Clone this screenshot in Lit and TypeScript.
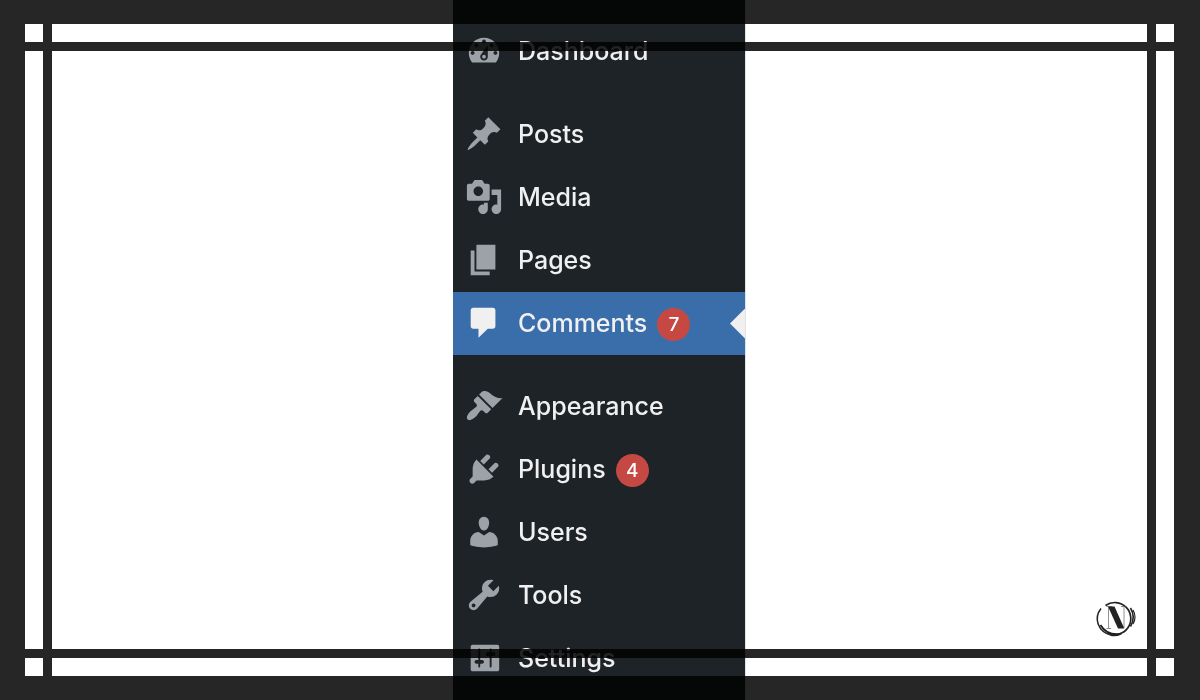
import { LitElement, html, css, svg, nothing } from "lit";
import { customElement, property } from "lit/decorators.js";

const ICONS: Record<string, string> = {
  dashboard:
    "M3.76 16h12.48c1.1-1.37 1.76-3.11 1.76-5 0-4.42-3.58-8-8-8s-8 3.58-8 8c0 1.89.66 3.63 1.76 5zM10 4c.55 0 1 .45 1 1s-.45 1-1 1-1-.45-1-1 .45-1 1-1zM6 6c.55 0 1 .45 1 1s-.45 1-1 1-1-.45-1-1 .45-1 1-1zm8 0c.55 0 1 .45 1 1s-.45 1-1 1-1-.45-1-1 .45-1 1-1zm-5.37 5.55L12 7v6c0 1.1-.9 2-2 2s-2-.9-2-2c0-.57.24-1.08.63-1.45zM4 10c.55 0 1 .45 1 1s-.45 1-1 1-1-.45-1-1 .45-1 1-1zm12 0c.55 0 1 .45 1 1s-.45 1-1 1-1-.45-1-1 .45-1 1-1zm-5 3c0-.55-.45-1-1-1s-1 .45-1 1 .45 1 1 1 1-.45 1-1z",
  posts:
    "M10.44 3.02l1.82-1.82 6.36 6.35-1.83 1.82c-1.05-.68-2.48-.57-3.41.36l-.75.75c-.92.93-1.04 2.35-.35 3.41l-1.83 1.82-2.41-2.41-2.8 2.79c-.42.42-3.38 2.71-3.8 2.29s1.86-3.39 2.28-3.81l2.79-2.79L4.1 9.36l1.83-1.82c1.05.69 2.48.57 3.4-.36l.75-.75c.93-.92 1.05-2.35.36-3.41z",
  media:
    "M13 11V4c0-.55-.45-1-1-1h-1.67L9 1H5L3.67 3H2c-.55 0-1 .45-1 1v7c0 .55.45 1 1 1h10c.55 0 1-.45 1-1zM7 4.5c1.38 0 2.5 1.12 2.5 2.5S8.38 9.5 7 9.5 4.5 8.38 4.5 7 5.62 4.5 7 4.5zM14 6h5v10.5c0 1.38-1.12 2.5-2.5 2.5S14 17.88 14 16.5s1.12-2.5 2.5-2.5c.17 0 .34.02.5.05V9h-3V6zm-4 8.05V13h2v3.5c0 1.38-1.12 2.5-2.5 2.5S7 17.88 7 16.5 8.12 14 9.5 14c.17 0 .34.02.5.05z",
  pages: "M6 15V2h10v13H6zm-1 1h8v2H3V5h2v11z",
  comments:
    "M4.3 2h10.4c.72 0 1.3.58 1.3 1.3v8.4c0 .72-.58 1.3-1.3 1.3H12l-4.9 4.8V13H4.3c-.72 0-1.3-.58-1.3-1.3V3.3C3 2.58 3.58 2 4.3 2z",
  appearance:
    "M14.48 11.06L7.41 3.99l1.5-1.5c.5-.56 2.3-.47 3.51.32 1.21.8 1.43 1.28 2.91 2.1 1.18.64 2.45 1.26 4.45.85zm-.71.71L6.7 4.7 4.93 6.47c-.39.39-.39 1.02 0 1.41l1.06 1.06c.39.39.39 1.03 0 1.42-.6.6-1.43 1.11-2.21 1.69-.35.26-.7.53-1.01.84C1.43 14.23.4 16.08 1.4 17.07c.99 1 2.84-.03 4.18-1.36.31-.31.58-.66.85-1.02.57-.78 1.08-1.61 1.69-2.21.39-.39 1.02-.39 1.41 0l1.06 1.06c.39.39 1.02.39 1.41 0z",
  plugins:
    "M13.11 4.36L9.87 7.6 8 5.73l3.24-3.24c.35-.34 1.05-.2 1.56.32.52.51.66 1.21.31 1.55zm-8 1.77l.91-1.12 9.01 9.01-1.19.84c-.71.71-2.63 1.16-3.82 1.16H6.14L4.9 17.26c-.59.59-1.54.59-2.12 0-.59-.58-.59-1.53 0-2.12l1.24-1.24v-3.88c0-1.13.4-3.19 1.09-3.89zm7.26 3.97l3.24-3.24c.34-.35 1.04-.21 1.55.31.52.51.66 1.21.31 1.55l-3.24 3.25z",
  users:
    "M10 9.25c-2.27 0-2.73-3.44-2.73-3.44C7 4.02 7.82 2 9.97 2c2.16 0 2.98 2.02 2.71 3.81 0 0-.41 3.44-2.68 3.44zm0 2.57L12.72 10c2.39 0 4.52 2.33 4.52 4.53v2.49s-3.65 1.13-7.24 1.13c-3.65 0-7.24-1.13-7.24-1.13v-2.49c0-2.25 1.94-4.48 4.47-4.48z",
  tools:
    "M16.68 9.77c-1.34 1.34-3.3 1.67-4.95.99l-5.41 6.52c-.99.99-2.59.99-3.58 0s-.99-2.59 0-3.57l6.52-5.42c-.68-1.65-.35-3.61.99-4.95 1.28-1.28 3.12-1.62 4.72-1.06l-2.89 2.89 2.82 2.82 2.86-2.87c.53 1.58.18 3.39-1.08 4.65zM3.81 16.21c.4.39 1.04.39 1.43 0 .4-.4.4-1.04 0-1.43-.39-.4-1.03-.4-1.43 0-.39.39-.39 1.03 0 1.43z",
  settings:
    "M18 16V4c0-.55-.45-1-1-1H4c-.55 0-1 .45-1 1v12c0 .55.45 1 1 1h13c.55 0 1-.45 1-1zM8 11h1c.55 0 1 .45 1 1s-.45 1-1 1H8v1.5c0 .28-.22.5-.5.5s-.5-.22-.5-.5V13H6c-.55 0-1-.45-1-1s.45-1 1-1h1V5.5c0-.28.22-.5.5-.5s.5.22.5.5V11zm5-2h-1c-.55 0-1-.45-1-1s.45-1 1-1h1V5.5c0-.28.22-.5.5-.5s.5.22.5.5V7h1c.55 0 1 .45 1 1s-.45 1-1 1h-1v5.5c0 .28-.22.5-.5.5s-.5-.22-.5-.5V9z",
};

interface MenuItem {
  icon: string;
  label: string;
  count?: number;
  current?: boolean;
}

const GROUPS: MenuItem[][] = [
  [{ icon: "dashboard", label: "Dashboard" }],
  [
    { icon: "posts", label: "Posts" },
    { icon: "media", label: "Media" },
    { icon: "pages", label: "Pages" },
    { icon: "comments", label: "Comments", count: 7, current: true },
  ],
  [
    { icon: "appearance", label: "Appearance" },
    { icon: "plugins", label: "Plugins", count: 4 },
    { icon: "users", label: "Users" },
    { icon: "tools", label: "Tools" },
    { icon: "settings", label: "Settings" },
  ],
];

@customElement("admin-menu")
export class AdminMenu extends LitElement {
  @property({ attribute: false }) groups: MenuItem[][] = [];

  static styles = css`
    :host {
      display: block;
      box-sizing: border-box;
      width: 292px;
      padding-top: 20px;
      background: #1d2327;
      box-shadow: 1px 0 #e2e2e2;
      font-family: Inter, "Liberation Sans", sans-serif;
    }
    .menu {
      display: flex;
      flex-direction: column;
      gap: 20px;
    }
    .group {
      list-style: none;
      margin: 0;
      padding: 0;
    }
    .item {
      display: flex;
      align-items: center;
      box-sizing: border-box;
      height: 63px;
      padding: 0 0 2px 12px;
      color: #f0f0f1;
      text-decoration: none;
      font-size: 25px;
      font-weight: 450;
      line-height: 32px;
    }
    .icon {
      width: 38px;
      height: 38px;
      margin-right: 15px;
      fill: #9ca2a7;
    }
    .count {
      width: 33px;
      margin: 4px 0 0 10px;
      border-radius: 50%;
      background: #c64843;
      color: #fff;
      font-size: 19px;
      font-weight: 500;
      line-height: 33px;
      text-align: center;
    }
    .current {
      background: #3a6eab;
    }
    .current .icon {
      fill: #f0f0f1;
    }
    .pointer {
      width: 15px;
      height: 30px;
      margin: 2px 0 0 auto;
      background: #f0f0f1;
      clip-path: polygon(100% 0, 100% 100%, 0 50%);
    }
  `;

  private renderItem(item: MenuItem) {
    return html`<li>
      <a
        class="item ${item.current ? "current" : ""}"
        href="#${item.icon}"
        aria-current=${item.current ? "page" : nothing}
      >
        <svg class="icon" viewBox="0 0 20 20" aria-hidden="true">
          ${svg`<path fill-rule="evenodd" d=${ICONS[item.icon]}></path>`}
        </svg>
        <span>${item.label}</span>
        ${item.count ? html`<span class="count">${item.count}</span>` : nothing}
        ${item.current ? html`<span class="pointer"></span>` : nothing}
      </a>
    </li>`;
  }

  render() {
    return html`<nav class="menu" aria-label="Main menu">
      ${this.groups.map((g) => html`<ul class="group">${g.map((i) => this.renderItem(i))}</ul>`)}
    </nav>`;
  }
}

@customElement("app-root")
export class AppRoot extends LitElement {
  static styles = css`
    :host {
      display: flex;
      justify-content: center;
      position: relative;
      box-sizing: border-box;
      height: 100vh;
      padding-right: 2px;
      overflow: hidden;
      background: #fff;
    }
    /* The frame darkens whatever lies below it, menu included. */
    .frame {
      position: absolute;
      inset: 0;
      display: grid;
      grid-template-columns: 18px 1fr 18px;
      grid-template-rows: 18px 1fr 18px;
      border: solid #262626;
      border-width: 24px 26px 24px 25px;
      mix-blend-mode: multiply;
      pointer-events: none;
    }
    .across {
      grid-area: 2 / 1 / 3 / 4;
      border: solid #262626;
      border-width: 9px 0;
    }
    .down {
      grid-area: 1 / 2 / 4 / 3;
      display: grid;
      grid-template-rows: 27px 1fr 27px;
      grid-template-columns: 9px 1fr 9px;
    }
    .bar {
      background: #262626;
    }
    .left {
      grid-area: 1 / 1 / 4 / 2;
    }
    .right {
      grid-area: 1 / 3 / 4 / 4;
    }
    .mark {
      position: absolute;
      right: 62px;
      bottom: 60px;
      width: 44px;
      height: 42px;
    }
  `;

  render() {
    return html`
      <admin-menu .groups=${GROUPS}></admin-menu>
      <svg class="mark" viewBox="0 0 44 42" role="img" aria-label="N">
        <g fill="none" stroke="#222">
          <path d="M11.5 7.5A16 16 0 1 1 14 35" stroke-width="1.7" />
          <path d="M7 10.5C-.5 20 3.5 34 18 37.5Q23 38 27.5 35.5" stroke-width="1.5" />
          <path d="M6.5 27C10 33 17 37 26 36" stroke-width="1.8" />
          <path d="M36.5 10Q42 19 36.5 28.5" stroke-width="1.6" />
          <path d="M39 12Q43 19 39 26" stroke-width="1.2" />
          <path d="M14.5 9V30M30 9V30" stroke="#777" stroke-width=".8" />
          <path d="M12.5 30.5H17M12.5 8.5H18M27 8.5H32" stroke="#555" stroke-width=".7" />
        </g>
        <path d="M14 8.5H20.5L30.3 30.5H24Z" fill="#222" />
      </svg>
      <div class="frame">
        <div class="across"></div>
        <div class="down">
          <div class="bar left"></div>
          <div class="bar right"></div>
        </div>
      </div>
    `;
  }
}
